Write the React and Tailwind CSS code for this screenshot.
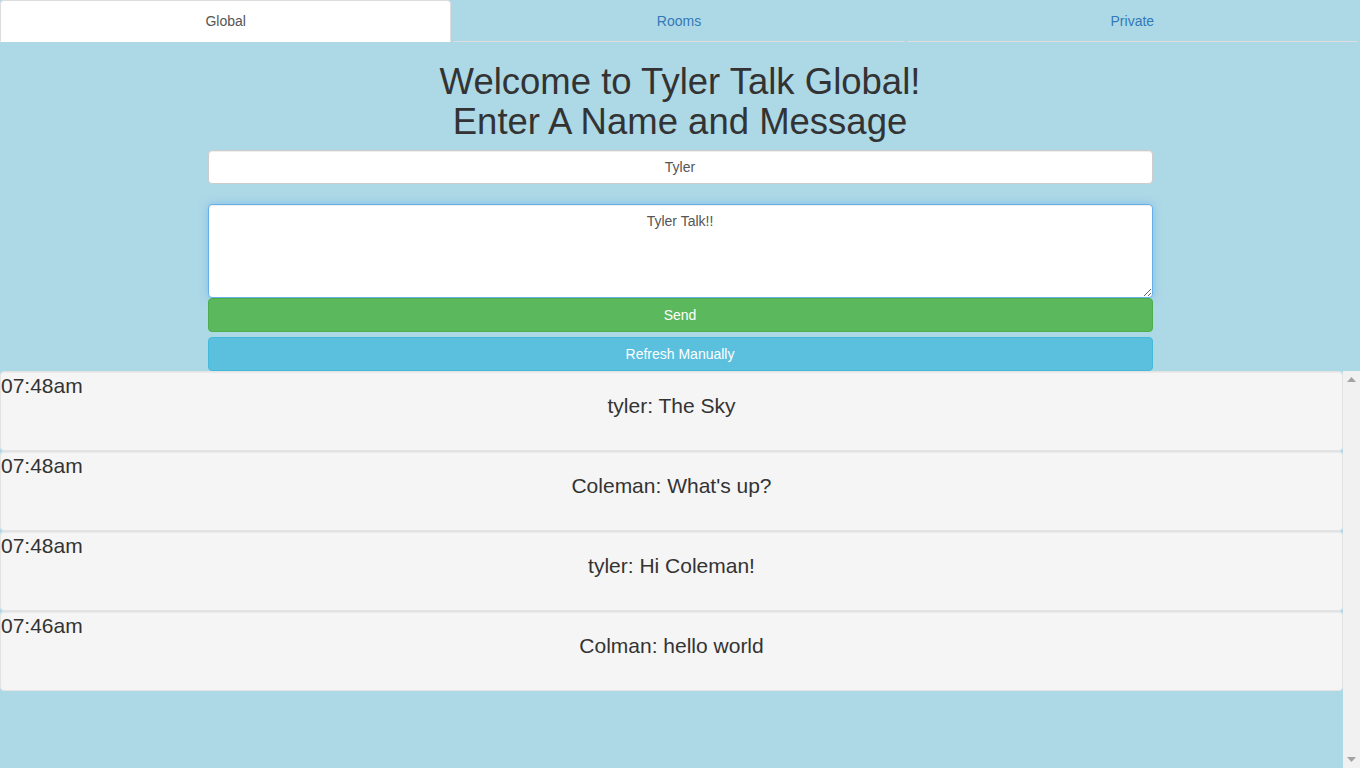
import React, { useState } from "react";

const tabs = ["Global", "Rooms", "Private"];

const messages = [
  { time: "07:48am", name: "tyler", text: "The Sky" },
  { time: "07:48am", name: "Coleman", text: "What's up?" },
  { time: "07:48am", name: "tyler", text: "Hi Coleman!" },
  { time: "07:46am", name: "Colman", text: "hello world" },
];

function App() {
  const [activeTab, setActiveTab] = useState("Global");
  const [name, setName] = useState("Tyler");
  const [message, setMessage] = useState("Tyler Talk!!");

  return (
    <div className="h-screen flex flex-col bg-[#add8e6] text-[#333] font-['Liberation_Sans',Arial,sans-serif] text-[14px] leading-[20px] overflow-hidden">
      {/* Tabs */}
      <ul className="flex shrink-0">
        {tabs.map((tab) => (
          <li key={tab} className="flex-1">
            <button
              onClick={() => setActiveTab(tab)}
              className={`block w-[calc(100%-2px)] h-[42px] px-[15px] py-[10px] text-center rounded-t-[4px] border ${
                activeTab === tab
                  ? "bg-white border-[#ddd] border-b-white text-[#555]"
                  : "border-transparent border-b-[#ddd] text-[#337ab7]"
              }`}
            >
              {tab}
            </button>
          </li>
        ))}
      </ul>

      {/* Form */}
      <div className="shrink-0">
        <h1 className="mt-5 mb-[9px] text-center text-[36.5px] leading-[39.6px] font-normal">
          Welcome to Tyler Talk Global!
          <br />
          Enter A Name and Message
        </h1>
        <div className="w-[945px] mx-auto">
          <input
            value={name}
            onChange={(e) => setName(e.target.value)}
            className="block w-full h-[34px] px-3 py-[6px] bg-white border border-[#ccc] rounded-[4px] text-center text-[#555] shadow-[inset_0_1px_1px_rgba(0,0,0,0.075)] outline-none"
          />
          <textarea
            value={message}
            onChange={(e) => setMessage(e.target.value)}
            className="block w-full h-[94px] mt-[20px] px-3 py-[6px] bg-white border border-[#66afe9] rounded-[4px] text-center text-[#555] shadow-[inset_0_1px_1px_rgba(0,0,0,0.075),0_0_8px_rgba(102,175,233,0.6)] outline-none"
          />
          <button className="block w-full h-[34px] bg-[#5cb85c] border border-[#4cae4c] rounded-[4px] text-white">
            Send
          </button>
          <button className="block w-full h-[34px] mt-[5px] bg-[#5bc0de] border border-[#46b8da] rounded-[4px] text-white">
            Refresh Manually
          </button>
        </div>
      </div>

      {/* Messages + scrollbar */}
      <div className="flex flex-1 min-h-0">
        <div className="flex-1">
          {messages.map((m, i) => (
            <div
              key={i}
              className="h-[80px] pt-[4px] bg-[#f5f5f5] border border-[#e3e3e3] rounded-[4px] shadow-[inset_0_1px_1px_rgba(0,0,0,0.05)] text-[21px] leading-[20px]"
            >
              <div>{m.time}</div>
              <div className="text-center">
                {m.name}: {m.text}
              </div>
            </div>
          ))}
        </div>
        <div className="w-[17px] bg-[#f1f1f1] flex flex-col justify-between items-center py-[6px]">
          <svg width="9" height="5" viewBox="0 0 9 5">
            <path d="M0 5 L4.5 0 L9 5 Z" fill="#a3a3a3" />
          </svg>
          <svg width="9" height="5" viewBox="0 0 9 5">
            <path d="M0 0 L4.5 5 L9 0 Z" fill="#a3a3a3" />
          </svg>
        </div>
      </div>
    </div>
  );
}

export default App;
